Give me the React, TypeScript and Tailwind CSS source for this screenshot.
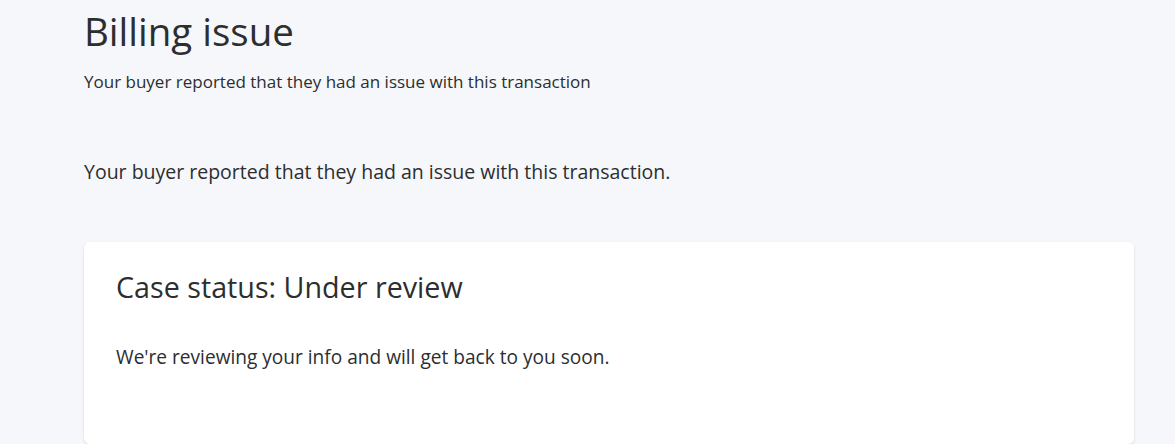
export default function App() {
  return (
    <div className="min-h-[444px] bg-[#f5f7fa] text-[#2c2e2f]" style={{ fontFamily: '"Open Sans", Lato, sans-serif' }}>
      <div className="pl-[84px] pr-[41px] pt-[7px]">
        <h1 className="text-[38.5px] leading-[48px] font-normal">Billing issue</h1>
        <p className="mt-[15px] text-[17px] leading-[24px]">Your buyer reported that they had an issue with this transaction</p>
        <p className="mt-[64px] text-[19.5px] leading-[28px]">Your buyer reported that they had an issue with this transaction.</p>
        <div className="mt-[56px] rounded-[6px] bg-white shadow-[0_1px_3px_rgba(0,0,0,0.12)] px-[32px] pt-[27px] pb-[74px]">
          <h2 className="text-[28.7px] leading-[36px] font-normal">Case status: Under review</h2>
          <p className="mt-[39px] text-[19.1px] leading-[26px]">We're reviewing your info and will get back to you soon.</p>
        </div>
      </div>
    </div>
  );
}
